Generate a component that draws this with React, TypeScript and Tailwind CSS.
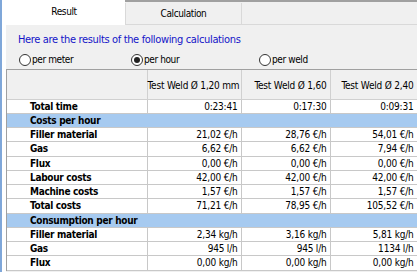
import React from "react";

const font = { fontFamily: "'DejaVu Sans', sans-serif" };

type Row =
  | { kind: "section"; label: string }
  | { kind: "data"; label: string; values: string[] };

const rows: Row[] = [
  { kind: "data", label: "Total time", values: ["0:23:41", "0:17:30", "0:09:31"] },
  { kind: "section", label: "Costs per hour" },
  { kind: "data", label: "Filler material", values: ["21,02 €/h", "28,76 €/h", "54,01 €/h"] },
  { kind: "data", label: "Gas", values: ["6,62 €/h", "6,62 €/h", "7,94 €/h"] },
  { kind: "data", label: "Flux", values: ["0,00 €/h", "0,00 €/h", "0,00 €/h"] },
  { kind: "data", label: "Labour costs", values: ["42,00 €/h", "42,00 €/h", "42,00 €/h"] },
  { kind: "data", label: "Machine costs", values: ["1,57 €/h", "1,57 €/h", "1,57 €/h"] },
  { kind: "data", label: "Total costs", values: ["71,21 €/h", "78,95 €/h", "105,52 €/h"] },
  { kind: "section", label: "Consumption per hour" },
  { kind: "data", label: "Filler material", values: ["2,34 kg/h", "3,16 kg/h", "5,81 kg/h"] },
  { kind: "data", label: "Gas", values: ["945 l/h", "945 l/h", "1134 l/h"] },
  { kind: "data", label: "Flux", values: ["0,00 kg/h", "0,00 kg/h", "0,00 kg/h"] },
];

function Radio({ checked, label }: { checked?: boolean; label: string }) {
  return (
    <div className="flex items-center gap-[1px]">
      <span className="w-[12px] h-[12px] rounded-full border border-[#333] bg-white flex items-center justify-center">
        {checked && <span className="w-[6px] h-[6px] rounded-full bg-[#222]" />}
      </span>
      <span className="text-[10px] tracking-[-0.4px] font-stretch-condensed text-black leading-none">{label}</span>
    </div>
  );
}

export default function App() {
  return (
    <div className="w-[417px] h-[272px] overflow-hidden bg-white relative" style={font}>
      <div className="flex h-full">
        <div className="w-[2px] bg-[#7fa7d9] shrink-0" />
        <div className="flex-1 flex flex-col min-w-0">
          {/* tab bar */}
          <div className="h-[25px] flex shrink-0 bg-[#f0f0f0]">
            <div className="w-[1px] bg-white" />
            <div className="w-[122px] bg-white flex items-center justify-center text-[10px] tracking-[-0.4px] font-stretch-condensed text-black pb-[2px]">
              Result
            </div>
            <div className="flex-1 flex flex-col border-t-2 border-[#a0a0a0]">
              <div className="flex flex-1 border-b border-[#d9d9d9]">
                <div className="w-[117px] mt-[1px] border-x border-[#d9d9d9] flex items-center justify-center text-[10px] tracking-[-0.4px] font-stretch-condensed text-black">
                  Calculation
                </div>
              </div>
            </div>
          </div>
          {/* page */}
          <div className="flex-1 flex min-h-0">
            <div className="w-[4px] bg-white shrink-0" />
            <div className="flex-1 bg-[#f0f0f0] flex flex-col min-w-0">
              <div className="h-[8px]" />
              <div className="pl-[12px] text-[11px] tracking-[-0.35px] font-stretch-condensed text-[#1414c8] leading-[14px]">
                Here are the results of the following calculations
              </div>
              <div className="flex pl-[13px] mt-[7px] h-[14px]">
                <div className="w-[112px]"><Radio label="per meter" /></div>
                <div className="w-[128px]"><Radio checked label="per hour" /></div>
                <div><Radio label="per weld" /></div>
              </div>
              <div className="mt-[1px] border-l border-t border-[#a0a0a0] bg-white">
                <table className="border-collapse text-[10px] tracking-[-0.2px] font-stretch-condensed table-fixed" style={{ width: 410 }}>
                  <colgroup>
                    <col style={{ width: 140 }} />
                    <col style={{ width: 94 }} />
                    <col style={{ width: 89 }} />
                    <col style={{ width: 87 }} />
                  </colgroup>
                  <thead>
                    <tr className="h-[29px] bg-[#f0f0f0]">
                      <th className="border-r border-b border-[#d0d0d0]" />
                      <th className="border-r border-b border-[#d0d0d0] font-normal text-right pr-[3px] pt-[2px] whitespace-nowrap">Test Weld Ø 1,20 mm</th>
                      <th className="border-r border-b border-[#d0d0d0] font-normal text-right pr-[3px] pt-[2px] whitespace-nowrap">Test Weld Ø 1,60</th>
                      <th className="border-r border-b border-[#d0d0d0] font-normal text-right pr-[3px] pt-[2px] whitespace-nowrap">Test Weld Ø 2,40</th>
                    </tr>
                  </thead>
                  <tbody>
                    {rows.map((r, i) =>
                      r.kind === "section" ? (
                        <tr key={i} className="h-[14.25px] bg-[#a6caf0]">
                          <td colSpan={4} className="border-b border-[#c8c8c8] pl-[23px] font-bold tracking-[-0.3px] leading-[13px] whitespace-nowrap">
                            {r.label}
                          </td>
                        </tr>
                      ) : (
                        <tr key={i} className="h-[14.25px]">
                          <td className="border-r border-b border-[#c8c8c8] pl-[23px] font-bold tracking-[-0.3px] leading-[13px] whitespace-nowrap">
                            {r.label}
                          </td>
                          {r.values.map((v, j) => (
                            <td key={j} className="border-r border-b border-[#c8c8c8] text-right pr-[3px] leading-[13px] whitespace-nowrap">
                              {v}
                            </td>
                          ))}
                        </tr>
                      )
                    )}
                  </tbody>
                </table>
              </div>
            </div>
          </div>
        </div>
      </div>
    </div>
  );
}
